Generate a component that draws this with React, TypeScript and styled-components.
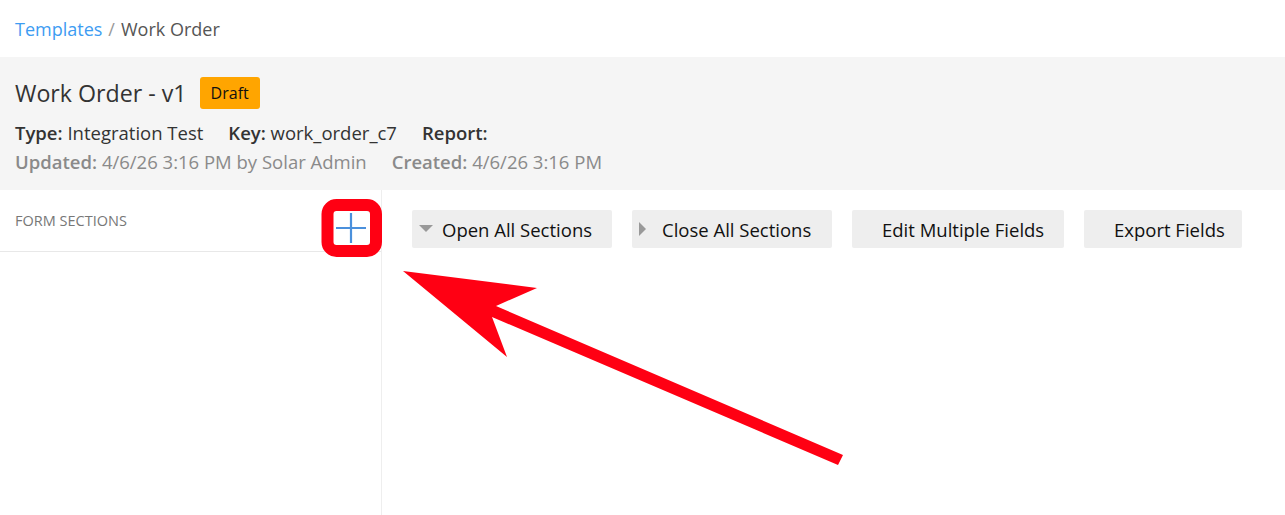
import styled, { createGlobalStyle } from "styled-components";

const GlobalStyle = createGlobalStyle`
  html, body, #root {
    height: 100%;
  }
  body {
    margin: 0;
    background: #ffffff;
    font-family: "Open Sans", "Noto Sans", sans-serif;
    color: #333333;
  }
`;

interface ActionItem {
  label: string;
  caret?: "down" | "right";
  width: number;
}

const actions: ActionItem[] = [
  { label: "Open All Sections", caret: "down", width: 200 },
  { label: "Close All Sections", caret: "right", width: 200 },
  { label: "Edit Multiple Fields", width: 212 },
  { label: "Export Fields", width: 158 },
];

export default function App() {
  return (
    <>
      <GlobalStyle />
      <Page>
        <Breadcrumb>
          <CrumbLink href="#">Templates</CrumbLink>
          <CrumbSep>/</CrumbSep>
          <span>Work Order</span>
        </Breadcrumb>

        <Header>
          <TitleRow>
            <Title>Work Order - v1</Title>
            <Badge>Draft</Badge>
          </TitleRow>
          <MetaRow>
            <MetaItem>
              <b>Type:</b> Integration Test
            </MetaItem>
            <MetaItem>
              <b>Key:</b> work_order_c7
            </MetaItem>
            <MetaItem>
              <b>Report:</b>
            </MetaItem>
          </MetaRow>
          <MetaRow $muted>
            <MetaItem>
              <b>Updated:</b> 4/6/26 3:16 PM by Solar Admin
            </MetaItem>
            <MetaItem>
              <b>Created:</b> 4/6/26 3:16 PM
            </MetaItem>
          </MetaRow>
        </Header>

        <Workspace>
          <Sidebar>
            <SidebarHead>
              <SidebarTitle>Form Sections</SidebarTitle>
              <AddButton aria-label="Add section">
                <svg width="30" height="32" viewBox="0 0 30 32">
                  <path d="M15 1 V31 M0 16 H30" stroke="#4a90dc" strokeWidth="2.2" fill="none" />
                </svg>
              </AddButton>
            </SidebarHead>
          </Sidebar>

          <Main>
            <Toolbar>
              {actions.map(({ label, caret, width }) => (
                <ActionButton key={label} $width={width}>
                  <CaretSlot>
                    {caret === "down" && (
                      <svg width="14" height="8" viewBox="0 0 14 8">
                        <path d="M0 0 H14 L7 7 Z" fill="#999999" />
                      </svg>
                    )}
                    {caret === "right" && (
                      <svg width="8" height="14" viewBox="0 0 8 14">
                        <path d="M0 0 L7 7 L0 14 Z" fill="#999999" />
                      </svg>
                    )}
                  </CaretSlot>
                  {label}
                </ActionButton>
              ))}
            </Toolbar>
          </Main>
        </Workspace>

        <Annotation width="1285" height="515" viewBox="0 0 1285 515">
          <rect x="327.5" y="205" width="48.5" height="46" rx="9" fill="none" stroke="#ff0013" strokeWidth="12" />
          <polygon
            points="403,271 537,288 496,306 843,455 838,465 492,317 507,357"
            fill="#ff0013"
          />
        </Annotation>
      </Page>
    </>
  );
}

const Page = styled.div`
  position: relative;
  min-height: 100vh;
  display: flex;
  flex-direction: column;
`;

const Breadcrumb = styled.nav`
  height: 57px;
  display: flex;
  align-items: center;
  padding: 0 15px;
  font-size: 18px;
  color: #555555;
`;

const CrumbLink = styled.a`
  color: #3d9cf2;
  text-decoration: none;
`;

const CrumbSep = styled.span`
  margin: 0 6px;
  color: #999999;
`;

const Header = styled.header`
  background: #f5f5f5;
  padding: 20px 15px 17px;
  display: flex;
  flex-direction: column;
`;

const TitleRow = styled.div`
  display: flex;
  align-items: center;
  height: 32px;
  gap: 13px;
`;

const Title = styled.h1`
  margin: 0;
  font-size: 23.2px;
  font-weight: 400;
  color: #333333;
`;

const Badge = styled.span`
  background: #ffa500;
  color: #111111;
  border-radius: 3px;
  height: 32px;
  padding: 0 11px;
  display: inline-flex;
  align-items: center;
  font-size: 16px;
`;

const MetaRow = styled.div<{ $muted?: boolean }>`
  display: flex;
  gap: 25px;
  height: 24px;
  align-items: center;
  margin-top: ${(p) => (p.$muted ? "5px" : "11px")};
  font-size: 18.5px;
  color: ${(p) => (p.$muted ? "#8a8a8a" : "#333333")};

  b {
    font-weight: 600;
  }
`;

const MetaItem = styled.span`
  white-space: nowrap;
`;

const Workspace = styled.div`
  flex: 1;
  display: flex;
`;

const Sidebar = styled.aside`
  width: 381px;
  border-right: 1px solid #eeeeee;
`;

const SidebarHead = styled.div`
  height: 61px;
  display: flex;
  align-items: center;
  justify-content: space-between;
  padding: 0 15px;
  border-bottom: 1px solid #e8e8e8;
`;

const SidebarTitle = styled.span`
  text-transform: uppercase;
  font-size: 14.5px;
  color: #777777;
`;

const AddButton = styled.button`
  border: 0;
  background: transparent;
  padding: 0;
  margin-top: 15px;
  display: flex;
  cursor: pointer;
`;

const Main = styled.main`
  flex: 1;
  padding: 20px 30px;
`;

const Toolbar = styled.div`
  display: flex;
  gap: 20px;
`;

const ActionButton = styled.button<{ $width: number }>`
  width: ${(p) => p.$width}px;
  height: 38px;
  border: 0;
  border-radius: 2px;
  background: #eeeeee;
  display: flex;
  align-items: center;
  padding: 0 0 0 7px;
  font-family: inherit;
  font-size: 18.5px;
  color: #111111;
  white-space: nowrap;
`;

const CaretSlot = styled.span`
  width: 23px;
  display: flex;
  align-items: center;
  justify-content: flex-start;
  flex: none;
`;

const Annotation = styled.svg`
  position: absolute;
  top: 0;
  left: 0;
  pointer-events: none;
`;
